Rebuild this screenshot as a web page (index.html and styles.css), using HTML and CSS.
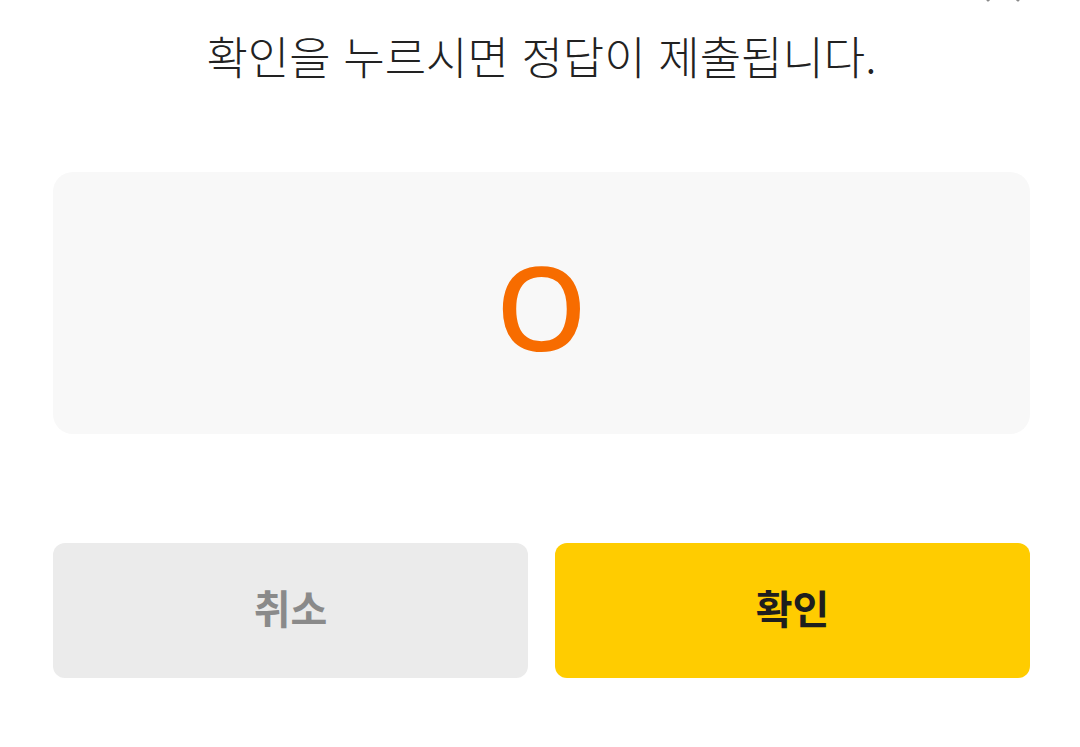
FILE: index.html
```html
<!DOCTYPE html>
<html lang="ko">
<head>
    <meta charset="UTF-8">
    <meta name="viewport" content="width=device-width, initial-scale=1.0">
    <title>정답 제출</title>
    <link rel="stylesheet" href="styles.css">
</head>
<body>
    <div class="sheet">
        <!-- close icon, mostly scrolled above the view -->
        <svg class="close" width="34" height="34" viewBox="0 0 34 34">
            <path d="M2 2 L32 32 M32 2 L2 32" stroke="#8a8a8a" stroke-width="3" stroke-linecap="round" fill="none"/>
        </svg>

        <p class="notice">확인을 누르시면 정답이 제출됩니다.</p>

        <div class="answer">
            <span class="answer-mark">O</span>
        </div>

        <div class="actions">
            <button class="btn cancel">취소</button>
            <button class="btn confirm">확인</button>
        </div>
    </div>
</body>
</html>
```

FILE: styles.css
```css
body {
    margin: 0;
    padding: 0;
    background-color: #fff;
    font-family: "Noto Sans CJK KR", "Noto Sans", sans-serif;
}

.sheet {
    position: relative;
    padding: 0 50px 0 53px;
}

.close {
    position: absolute;
    top: -32px;
    right: 60px;
}

.notice {
    margin: 0;
    padding-top: 26px;
    font-size: 45px;
    line-height: 60px;
    font-weight: 300;
    color: #222;
    text-align: center;
}

.answer {
    margin-top: 86px;
    height: 262px;
    border-radius: 20px;
    background-color: #f8f8f8;
    display: flex;
    align-items: center;
    justify-content: center;
}

.answer-mark {
    font-family: "Noto Sans", sans-serif;
    font-size: 116px;
    font-weight: 500;
    line-height: 1;
    color: #f76c00;
    padding-top: 6px;
}

.actions {
    margin-top: 109px;
    display: flex;
    gap: 27px;
}

.btn {
    flex: 1;
    height: 135px;
    padding: 0 0 8px;
    border: none;
    border-radius: 12px;
    font-family: "Noto Sans CJK KR", sans-serif;
    font-size: 40px;
    font-weight: 700;
    cursor: pointer;
}

.btn.cancel {
    background-color: #ebebeb;
    color: #8a8a8a;
}

.btn.confirm {
    background-color: #ffcc00;
    color: #1e1e1e;
}
```
